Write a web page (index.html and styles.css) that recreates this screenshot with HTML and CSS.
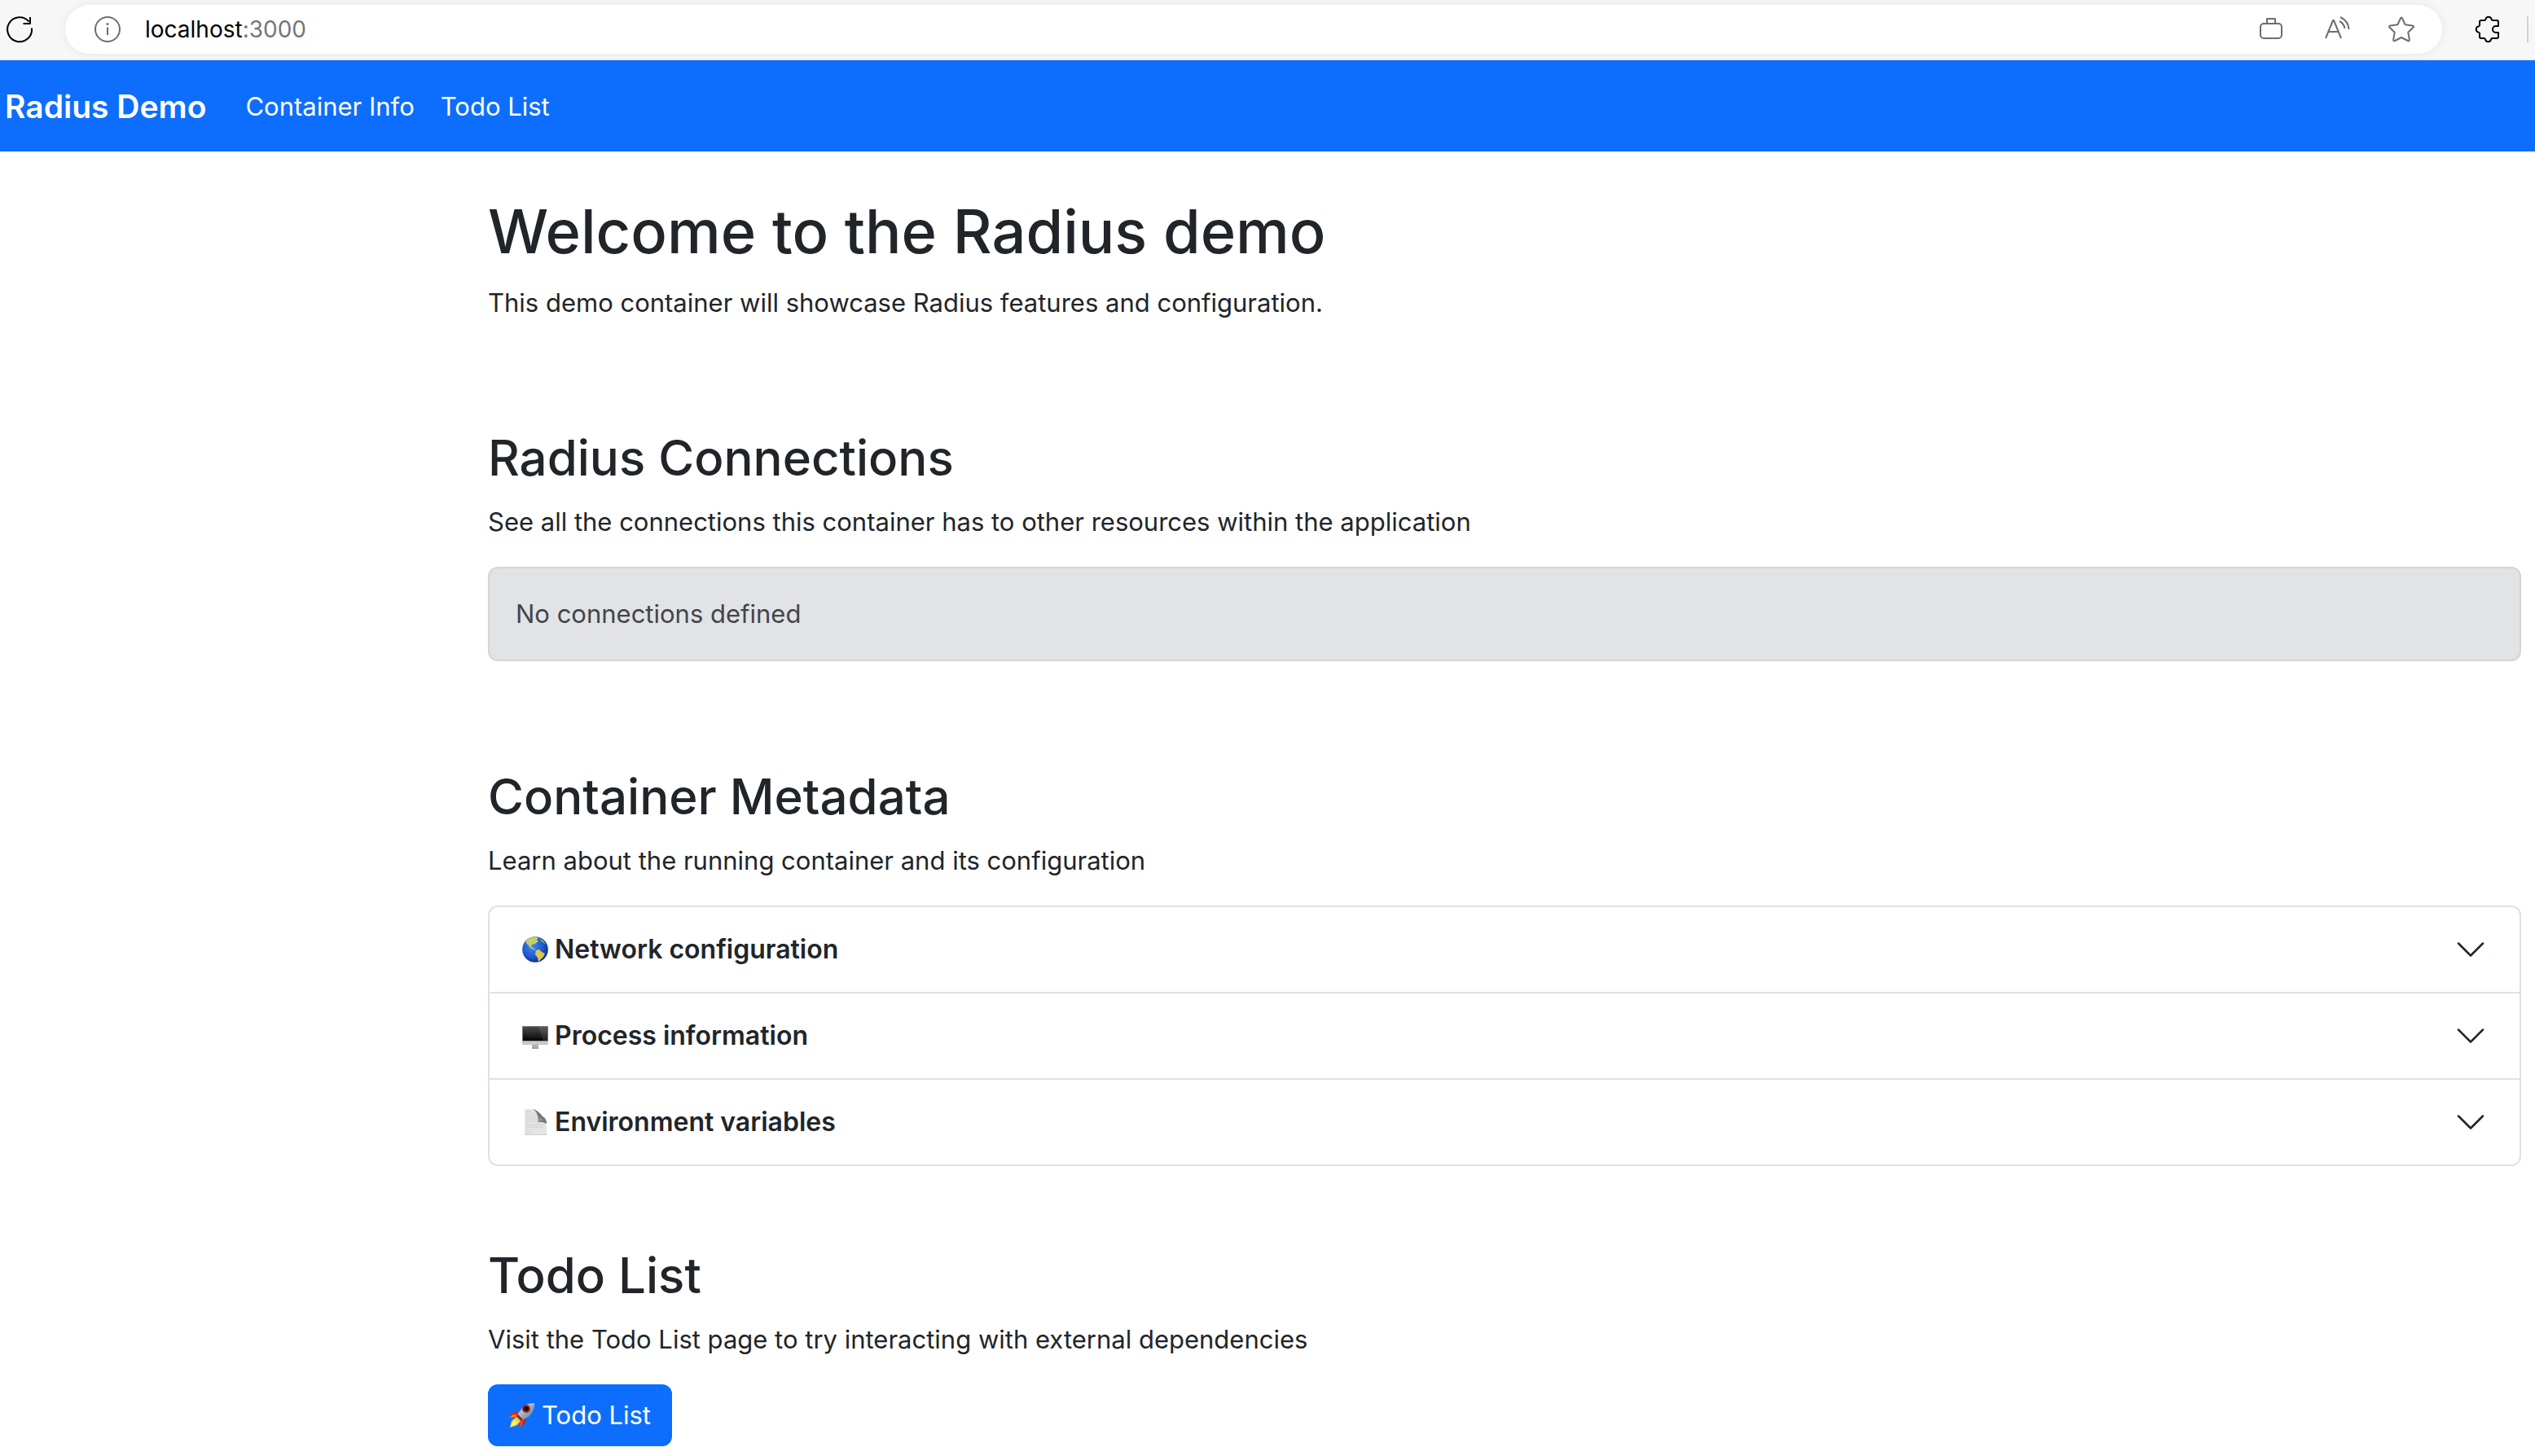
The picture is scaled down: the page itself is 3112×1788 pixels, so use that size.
FILE: index.html
```html
<!DOCTYPE html>
<html lang="en">
<head>
<meta charset="utf-8">
<title>Radius Demo</title>
<link rel="stylesheet" href="styles.css">
</head>
<body>
<div class="toolbar">
  <button class="tool tool-dark" type="button" aria-label="Reload">
    <svg viewBox="0 0 32 32" width="32" height="32"><path d="M31 14.500A15 15 0 1 1 27.500 6.500M29 1V9H20.500"/></svg>
  </button>
  <div class="address">
    <button class="tool" type="button" aria-label="Site information">
      <svg viewBox="0 0 32 32" width="32" height="32"><circle cx="16" cy="16" r="15"/><path d="M16 13.500V23"/><circle class="dot" cx="16" cy="9.500" r="1.500"/></svg>
    </button>
    <div class="url"><span class="host">localhost</span>:3000</div>
    <div class="actions">
      <button class="tool" type="button" aria-label="Shopping">
        <svg viewBox="0 0 32 32" width="32" height="32"><rect x="3" y="9" width="26" height="18" rx="4"/><path d="M11 9V3H21V9"/></svg>
      </button>
      <button class="tool" type="button" aria-label="Read aloud">
        <svg viewBox="0 0 32 32" width="32" height="32"><path d="M3 27L12 5H13L22 27M6.500 19H18.500M20 6Q25.500 9 26.500 15M21 1Q31 6 31.500 16"/></svg>
      </button>
      <button class="tool" type="button" aria-label="Add to favorites">
        <svg viewBox="0 0 32 32" width="32" height="32"><path d="M15 2.500Q16 0.500 17 2.500L20.700 10.300L29.500 11.500Q32 12 30.400 13.800L24.300 19.800L25.800 28.500Q26 31 23.800 30L16 26L8.200 30Q6 31 6.200 28.500L7.700 19.800L1.600 13.800Q0 12 2.500 11.500L11.300 10.300Z"/></svg>
      </button>
    </div>
  </div>
  <button class="tool tool-dark" type="button" aria-label="Extensions">
    <svg viewBox="0 0 32 32" width="32" height="32"><path d="M8 5H12Q13 5 13.400 3.500A3.700 3.700 0 0 1 20.600 3.500Q21 5 22 5H27Q29 5 29 7V12H26A4 4 0 0 0 26 20H29V25Q29 27 27 27H21.500Q20.500 27 20 28.600A3.600 3.600 0 0 1 13 28.600Q12.500 27 11.500 27H8Q6 27 6 25V21Q6 20 4.600 19.600A3.700 3.700 0 0 1 4.600 12.400Q6 12 6 11V7Q6 5 8 5Z"/></svg>
  </button>
  <span class="divider"></span>
</div>

<nav class="navbar">
  <a class="brand" href="#">Radius Demo</a>
  <a class="nav-link" href="#metadata">Container Info</a>
  <a class="nav-link" href="#todo">Todo List</a>
</nav>

<main class="page">
  <header>
    <h1>Welcome to the Radius demo</h1>
    <p>This demo container will showcase Radius features and configuration.</p>
  </header>

  <section class="section">
    <h2>Radius Connections</h2>
    <p>See all the connections this container has to other resources within the application</p>
    <div class="alert">No connections defined</div>
  </section>

  <section class="section" id="metadata">
    <h2>Container Metadata</h2>
    <p>Learn about the running container and its configuration</p>
    <div class="accordion">
      <button class="row" type="button">
        <svg class="emoji" viewBox="0 0 32 32" aria-hidden="true">
          <defs><radialGradient id="sea" cx=".4" cy=".4" r=".62"><stop offset="0" stop-color="#3f86f0"/><stop offset=".65" stop-color="#1f58cf"/><stop offset="1" stop-color="#10308a"/></radialGradient></defs>
          <circle cx="16" cy="16" r="15.800" fill="url(#sea)"/>
          <path d="M5 5Q10 0 17 .5L20 2L18 4L20 6L17 8L15 10L13 9L11 12L13 14L15 15L17 17L14 16L10 14L7 10Q4 9 5 5Z" fill="#c3cf66"/>
          <path d="M21 2L26 5L29 10L26 8L23 6Z" fill="#7da06a"/>
          <path d="M17 17L21 16L24 19L28 21L26 25L22 29L20 31L19 26L16 22Z" fill="#d8c84e"/>
        </svg>
        <span class="label">Network configuration</span>
        <svg class="chevron" viewBox="0 0 16 16" aria-hidden="true"><path d="M2 5L8 11L14 5"/></svg>
      </button>
      <button class="row" type="button">
        <svg class="emoji" viewBox="0 0 32 32" aria-hidden="true">
          <defs><linearGradient id="screen" x2="0" y2="1"><stop offset="0" stop-color="#4a4a4a"/><stop offset="1" stop-color="#050505"/></linearGradient></defs>
          <rect x="12" y="26" width="8" height="6" fill="#b4b4b8"/><path d="M12 27H20M12 31H20" stroke="#8f8f94"/>
          <rect y="4" width="32" height="23" rx="1" fill="#c9c9ce"/>
          <rect y="4" width="32" height="18.500" rx="1" fill="#77777b"/>
          <rect x="1" y="5" width="30" height="17" fill="url(#screen)"/>
          <path d="M20 5H31V22H26Z" fill="#fff" opacity=".1"/>
        </svg>
        <span class="label">Process information</span>
        <svg class="chevron" viewBox="0 0 16 16" aria-hidden="true"><path d="M2 5L8 11L14 5"/></svg>
      </button>
      <button class="row" type="button">
        <svg class="emoji" viewBox="0 0 32 32" aria-hidden="true">
          <defs><linearGradient id="curl" x1="1" y1="0" x2="0" y2="1"><stop offset="0" stop-color="#333"/><stop offset=".5" stop-color="#777"/><stop offset="1" stop-color="#ddd"/></linearGradient></defs>
          <path d="M3 0H16L30 14V32H3Z" fill="#e4e4e4"/>
          <path d="M5 3H11M5 6H16M5 9H17M5 12H18M5 15H18M5 19H26M5 22H26M5 26H10M5 29H12" stroke="#cfcfcf"/>
          <path d="M13 0Q20 3 19 15Q26 12 30 16Q29 11 25 9Q20 2 13 0Z" fill="url(#curl)"/>
          <path d="M19 15Q27 12 30 16V18Q24 15 19 16Z" fill="#777"/>
          <path d="M3 31.500H30" stroke="#cfcfcf"/>
        </svg>
        <span class="label">Environment variables</span>
        <svg class="chevron" viewBox="0 0 16 16" aria-hidden="true"><path d="M2 5L8 11L14 5"/></svg>
      </button>
    </div>
  </section>

  <section class="section section-close" id="todo">
    <h2>Todo List</h2>
    <p>Visit the Todo List page to try interacting with external dependencies</p>
    <a class="button" href="#todo">
      <svg class="emoji" viewBox="0 0 32 32" aria-hidden="true">
        <defs><linearGradient id="hull" x2="1" y2="1"><stop offset="0" stop-color="#e6edf2"/><stop offset=".5" stop-color="#9db4c4"/><stop offset="1" stop-color="#4c6478"/></linearGradient></defs>
        <path d="M12 11L4 13L0 19L9 18Z" fill="#e02a12"/><path d="M0 19L5 15L9 16L8 18Z" fill="#ff7a1c"/>
        <path d="M21 19L19 26L13 31L14 22Z" fill="#d01f10"/><path d="M13 31L14 24L17 22L16 28Z" fill="#f0501c"/>
        <path d="M9 18L14 23L10 28L1 31L3 23Z" fill="#ffcf2e"/><path d="M8 22L10 24L7 28L2 30L4 25Z" fill="#fff07a"/>
        <path d="M31 1Q23 0 16 7L9 17L15 23L25 17Q32 9 31 1Z" fill="url(#hull)"/>
        <path d="M9 17L15 23L17 21L11 15Z" fill="#9d2418"/>
        <circle cx="21" cy="8" r="5" fill="#b51d1d"/><circle cx="21" cy="8" r="3" fill="#1d1012"/>
      </svg>
      <span>Todo List</span>
    </a>
  </section>
</main>
</body>
</html>
```
FILE: styles.css
```css
* { box-sizing: border-box; }

body {
  margin: 0;
  background: #fff;
  color: #212529;
  font-family: Inter, "Liberation Sans", sans-serif;
  font-size: 31px;
  line-height: 48px;
}

button {
  font: inherit;
  color: inherit;
  border: 0;
  background: none;
  padding: 0;
}

a { color: inherit; text-decoration: none; }

svg { display: block; flex: none; }

/* Browser toolbar */
.toolbar {
  display: flex;
  align-items: center;
  height: 74px;
  padding: 0 8px 2px;
  background: #f7f7f7;
  border-bottom: 1px solid #ebebeb;
}

.tool { width: 32px; height: 32px; color: #6e6e6e; }
.tool-dark { color: #000; }

.tool svg {
  fill: none;
  stroke: currentColor;
  stroke-width: 2;
  stroke-linejoin: round;
  overflow: visible;
}

.tool .dot { fill: currentColor; stroke: none; }

.address {
  flex: 1;
  display: flex;
  align-items: center;
  height: 60px;
  margin: 0 40px;
  padding: 0 34px 0 36px;
  border-radius: 30px;
  background: #fff;
  box-shadow: 0 0 12px rgba(0, 0, 0, .08);
}

.url { flex: 1; margin-left: 30px; font-size: 28px; color: #767676; }
.host { color: #000; }
.actions { display: flex; gap: 48px; }
.divider { width: 2px; height: 32px; margin-left: 32px; background: #d0d0d0; }

/* Site navigation */
.navbar {
  display: flex;
  align-items: center;
  height: 112px;
  padding: 2px 6px 0;
  background: #0d6efd;
  color: #fff;
}

.brand { margin-right: 32px; font-size: 39px; font-weight: 600; }
.nav-link { padding: 0 16px; }

/* Page content */
.page { padding: 50px 17px 12px 599px; }

h1, h2 { margin: 0 0 16px; font-weight: 500; }
h1 { font-size: 74px; line-height: 96px; }
h2 { font-size: 60px; line-height: 77px; }
p { margin: 0; }

.section { margin-top: 128px; }
.section p { margin-bottom: 31px; }
.section-close { margin-top: 96px; }

.alert {
  padding: 32px;
  border: 2px solid #d3d6d8;
  border-radius: 12px;
  background: #e2e3e5;
  color: #41464b;
}

.accordion {
  border: 2px solid #dee2e6;
  border-radius: 12px;
}

.row {
  display: flex;
  align-items: center;
  width: 100%;
  height: 104px;
  padding: 0 40px;
  font-size: 32px;
  font-weight: 600;
  text-align: left;
}

.row + .row { height: 106px; border-top: 2px solid #dee2e6; }
.label { flex: 1; }
.emoji { width: 32px; height: 32px; margin-right: 8px; }

.chevron {
  width: 40px;
  height: 40px;
  fill: none;
  stroke: #212529;
  stroke-linecap: round;
  stroke-linejoin: round;
}

.button {
  display: inline-flex;
  align-items: center;
  height: 76px;
  padding: 0 26px;
  border-radius: 12px;
  background: #0d6efd;
  color: #fff;
}
```
